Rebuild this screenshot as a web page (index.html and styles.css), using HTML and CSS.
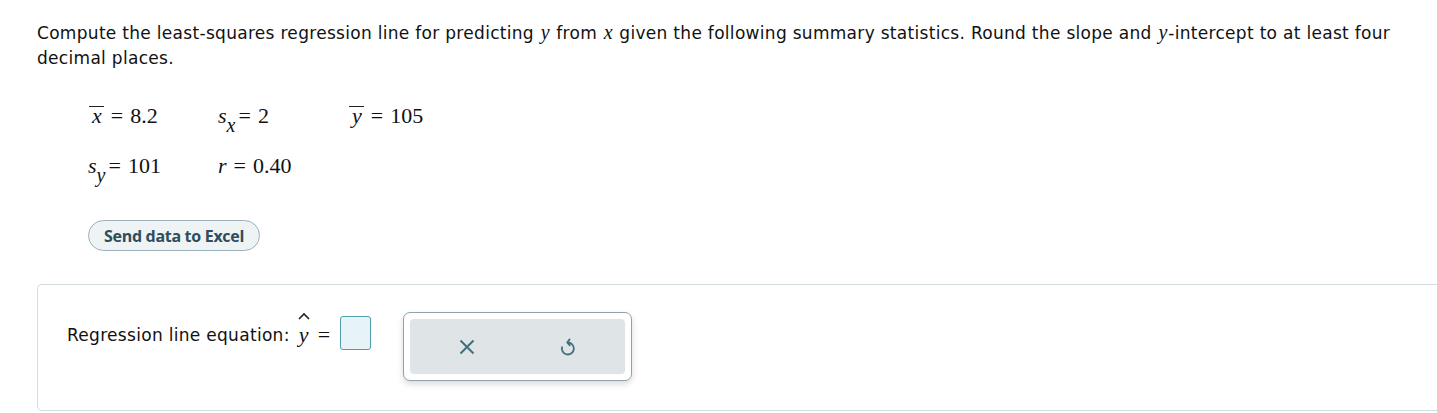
FILE: index.html
```html
<!DOCTYPE html>
<html>
<head>
<meta charset="utf-8">
<link rel="stylesheet" href="styles.css">
</head>
<body>
<div class="page">
  <p class="prompt">Compute the least-squares regression line for predicting <i class="mv">y</i> from <i class="mv">x</i> given the following summary statistics. Round the slope and <i class="mv">y</i>-intercept to at least four decimal places.</p>
  <div class="stats">
    <div class="stat"><span class="bar"><i>x</i></span><span class="eq">=</span>8.2</div>
    <div class="stat"><i>s</i><sub>x</sub><span class="eq">=</span>2</div>
    <div class="stat"><span class="bar"><i>y</i></span><span class="eq">=</span>105</div>
    <div class="stat"><i>s</i><sub>y</sub><span class="eq">=</span>101</div>
    <div class="stat"><i>r</i><span class="eq">=</span>0.40</div>
  </div>
  <button class="excel">Send data to Excel</button>
  <div class="answer">
    <div class="equation">
      <span class="label">Regression line equation:</span>
      <span class="yhat"><svg class="hat" width="12" height="8" viewBox="0 0 12 8"><path d="M1 7 L6 2 L11 7" stroke="#222" stroke-width="1.6" fill="none"/></svg><i>y</i></span>
      <span class="aeq">=</span>
      <span class="inbox"></span>
    </div>
    <div class="tools">
      <div class="tools-inner">
        <svg class="ico" width="18" height="18" viewBox="0 0 18 18"><path d="M2.5 2.5 L15.5 15.5 M15.5 2.5 L2.5 15.5" stroke="#426f7e" stroke-width="2" fill="none"/></svg>
        <svg class="ico" width="16" height="19" viewBox="0 0 16 19"><path d="M7.5 5.5 A6 6 0 1 1 2.2 9.5" stroke="#426f7e" stroke-width="1.8" fill="none"/><path d="M9.6 2.4 L7.2 5.5 L9.8 8.4" stroke="#426f7e" stroke-width="1.8" fill="none" stroke-linejoin="round" stroke-linecap="round"/></svg>
      </div>
    </div>
  </div>
</div>
</body>
</html>
```
FILE: styles.css
```css
html, body { margin: 0; padding: 0; background: #fff; overflow: hidden; }
.page { padding: 21px 0 0 37px; font-family: "DejaVu Sans", Verdana, sans-serif; color: #111; width: 1420px; }
.prompt { margin: 0; font-size: 17px; letter-spacing: 0.3px; line-height: 25px; max-width: 1370px; }
.mv { font-family: "Liberation Serif", serif; font-size: 20px; letter-spacing: 0; line-height: 20px; margin: 0 1px; }
.stats { display: grid; grid-template-columns: 130px 130px 130px; row-gap: 24px; margin: 32px 0 0 51px; font-family: "Liberation Serif", serif; font-size: 22px; line-height: 26px; color: #111; }
.stat { white-space: nowrap; }
.stat i { font-family: "Liberation Serif", serif; font-style: italic; }
.stat sub { font-family: "Liberation Serif", serif; font-style: italic; font-size: 20px; vertical-align: -9px; line-height: 0; margin-left: 0; }
.bar { display: inline-block; border-top: 1.5px solid #222; line-height: 18px; padding: 0 2px 0 3px; margin-left: 1px; }
.eq { margin: 0 7px 0 7px; }
.stat sub + .eq { margin-left: 3px; }
.excel { display: block; margin: 41px 0 0 51px; height: 31px; padding: 0 15px; border: 1px solid #9fb1b8; border-radius: 16px; background: #eef3f5; font-family: "Open Sans", sans-serif; font-weight: 700; font-size: 16px; letter-spacing: -0.3px; color: #2f4d5b; }
.answer { margin-top: 33px; border: 1px solid #d5dcdf; border-right: none; border-radius: 5px 0 0 5px; display: flex; align-items: flex-start; padding: 27px 0 0 29px; box-sizing: border-box; height: 127px; font-size: 17px; letter-spacing: 0.3px; }
.equation { display: flex; align-items: center; height: 34px; margin-top: 4px; }
.label { margin-right: 9px; margin-top: 3px; }
.yhat { position: relative; font-family: "Liberation Serif", serif; font-size: 22px; margin-top: 3px; }
.hat { position: absolute; left: -1px; top: -10px; }
.aeq { font-family: "Liberation Serif", serif; font-size: 22px; margin: 3px 9px 0 9px; }
.inbox { width: 29px; height: 32px; border: 1.5px solid #4f9eae; border-radius: 3px; background: #e6f4f8; }
.tools { margin-left: 32px; border: 1px solid #8ea3ad; border-radius: 7px; padding: 6px; background: #fff; box-shadow: 0 3px 6px rgba(0,0,0,0.15); }
.tools-inner { width: 215px; height: 55px; background: #dfe5e7; border-radius: 4px; display: flex; align-items: center; justify-content: space-around; padding: 0 6px; box-sizing: border-box; }
.ico { display: block; }
```
